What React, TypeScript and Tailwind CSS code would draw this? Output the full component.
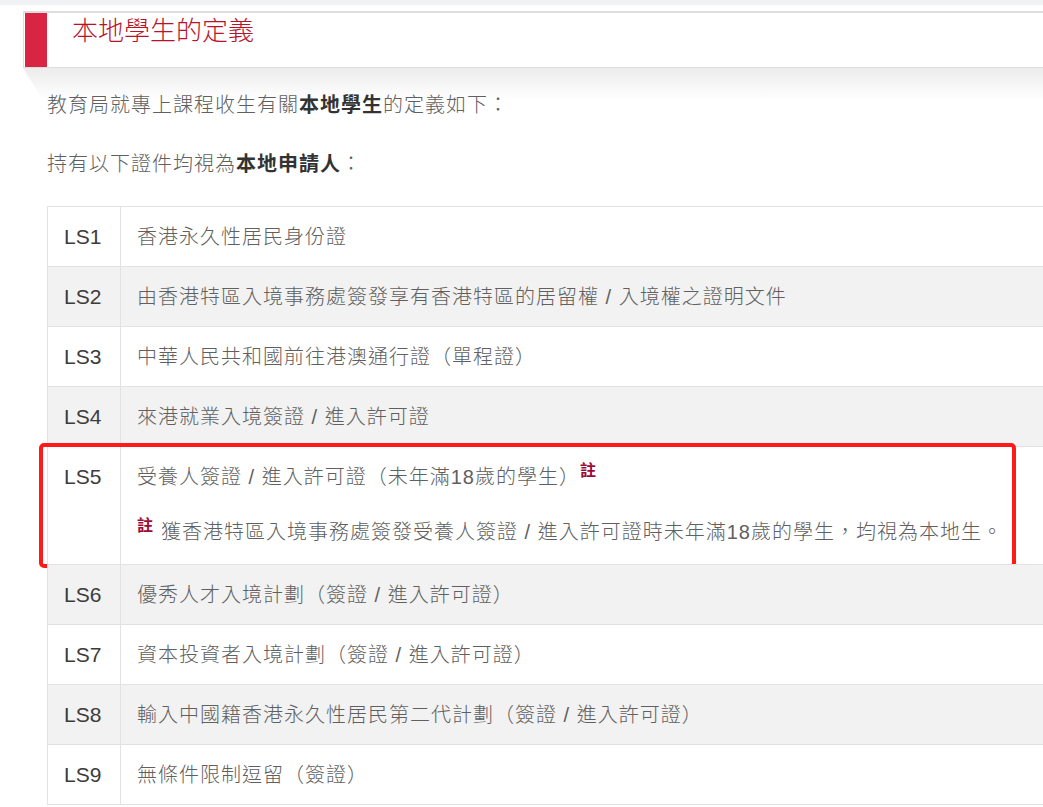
import React from 'react';

type Row = {
  code: string;
  text: React.ReactNode;
  note?: string;
};

const rows: Row[] = [
  { code: 'LS1', text: '香港永久性居民身份證' },
  { code: 'LS2', text: '由香港特區入境事務處簽發享有香港特區的居留權 / 入境權之證明文件' },
  { code: 'LS3', text: '中華人民共和國前往港澳通行證（單程證）' },
  { code: 'LS4', text: '來港就業入境簽證 / 進入許可證' },
  {
    code: 'LS5',
    text: '受養人簽證 / 進入許可證（未年滿18歲的學生）',
    note: '獲香港特區入境事務處簽發受養人簽證 / 進入許可證時未年滿18歲的學生，均視為本地生。',
  },
  { code: 'LS6', text: '優秀人才入境計劃（簽證 / 進入許可證）' },
  { code: 'LS7', text: '資本投資者入境計劃（簽證 / 進入許可證）' },
  { code: 'LS8', text: '輸入中國籍香港永久性居民第二代計劃（簽證 / 進入許可證）' },
  { code: 'LS9', text: '無條件限制逗留（簽證）' },
];

const Note = () => (
  <sup className="text-[16px] font-bold text-[#9b0b35] tracking-normal">註</sup>
);

const App = () => {
  return (
    <div className="w-[1043px] h-[807px] overflow-hidden bg-white font-['Liberation_Sans','Noto_Sans_CJK_TC',sans-serif] text-[#606060]">
      <div className="h-[5px] bg-[#f1f2f4]" />

      <div className="relative mt-[6px] ml-[23px] w-[1100px]">
        <div className="flex h-[57px] border-t-2 border-b border-l border-[#dddddd] bg-white">
          <div className="ml-[1px] w-[22px] bg-[#d92443]" />
          <h1 className="pl-[25px] text-[26px] leading-[36px] font-light text-[#b8132b]">
            本地學生的定義
          </h1>
        </div>
        <div className="absolute left-0 top-full h-[32px] w-full bg-gradient-to-b from-[#ececec] to-white [clip-path:polygon(0_0,100%_0,100%_100%,20px_100%)]" />
      </div>

      <div className="relative ml-[47px] text-[20px] tracking-[1px] font-light">
        <p className="mt-[22px] leading-[30px]">
          教育局就專上課程收生有關<b className="font-bold text-[#333]">本地學生</b>的定義如下：
        </p>
        <p className="mt-[29px] leading-[30px]">
          持有以下證件均視為<b className="font-bold text-[#333]">本地申請人</b>：
        </p>

        <div className="mt-[27px] w-[1100px] border-b border-[#e2e2e2]">
          {rows.map((row, i) => (
            <div
              key={row.code}
              className={`relative flex border-t border-l border-[#e2e2e2] ${
                i % 2 === 1 ? 'bg-[#f2f2f2]' : 'bg-white'
              }`}
            >
              <div className="w-[73px] shrink-0 border-r border-[#e2e2e2] pl-[16px] pt-[18px] text-[21px] leading-[24px] tracking-normal font-normal text-[#3c3c3c]">
                {row.code}
              </div>
              <div className={`pl-[16px] pt-[18px] leading-[24px] ${row.note ? 'pb-[20px]' : 'pb-[17px]'}`}>
                <div>
                  {row.text}
                  {row.note && <Note />}
                </div>
                {row.note && (
                  <div className="mt-[31px] flex items-baseline">
                    <Note />
                    <span className="ml-[8px]">{row.note}</span>
                  </div>
                )}
              </div>
              {row.note && (
                <div className="pointer-events-none absolute left-[-9px] top-[-4px] h-[125px] w-[977px] rounded-[5px] border-4 border-[#ff1a1a]" />
              )}
            </div>
          ))}
        </div>
      </div>
    </div>
  );
};

export default App;
